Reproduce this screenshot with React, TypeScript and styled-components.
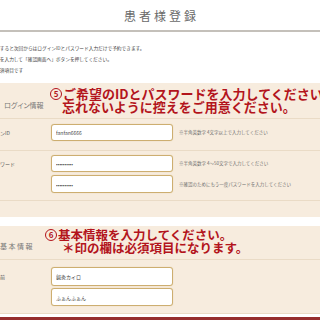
import styled, { createGlobalStyle } from "styled-components";

const GlobalStyle = createGlobalStyle`
  body {
    margin: 0;
    font-family: "Noto Sans CJK JP", "Noto Sans", sans-serif;
  }
`;

const Page = styled.div`
  width: 320px;
  height: 320px;
  overflow: hidden;
  background: #fff;
  display: flex;
  flex-direction: column;
`;

const Header = styled.header`
  height: 30px;
  flex: 0 0 auto;
  display: flex;
  align-items: center;
  justify-content: center;
  border-bottom: 2px solid #c4c0ba;
`;

const Title = styled.h1`
  margin: 0;
  padding-left: 3px;
  font-size: 12px;
  font-weight: 400;
  letter-spacing: 3px;
  color: #6a6a6a;
`;

const Intro = styled.div`
  height: 51px;
  box-sizing: border-box;
  padding-top: 11px;
  margin-left: -19px;
  font-size: 4.7px;
  line-height: 11px;
  color: #444;
  white-space: nowrap;
`;

const Section = styled.section<{ $pad: number }>`
  background: #f7ecde;
  padding-bottom: ${(p) => p.$pad}px;
`;

const Gap = styled.div`
  height: 9px;
  background: #fff;
`;

const SectionHead = styled.div<{ $h: number }>`
  height: ${(p) => p.$h}px;
  box-sizing: border-box;
  display: flex;
  align-items: flex-end;
  padding-bottom: 8px;
  border-bottom: 1px solid #eadbc6;
`;

const HeadLabel = styled.div<{ $indent: number; $spacing: number }>`
  width: 45px;
  flex: 0 0 45px;
  box-sizing: border-box;
  padding-left: ${(p) => p.$indent}px;
  font-size: 7px;
  line-height: 10px;
  letter-spacing: ${(p) => p.$spacing}px;
  color: #777;
  white-space: nowrap;
  font-feature-settings: "palt";
`;

const Note = styled.div<{ $size: number }>`
  margin-bottom: -3px;
  font-size: ${(p) => p.$size}px;
  line-height: 13px;
  font-weight: 700;
  color: #b3141c;
  white-space: nowrap;
`;

const NoteLine = styled.div<{ $indent: number }>`
  display: flex;
  align-items: center;
  padding-left: ${(p) => p.$indent}px;
`;

const CircleNum = styled.span`
  display: inline-flex;
  align-items: center;
  justify-content: center;
  box-sizing: border-box;
  width: 12px;
  height: 12px;
  margin-right: 1px;
  border: 1.5px solid #b3141c;
  border-radius: 50%;
  font-size: 8px;
  line-height: 1;
`;

const FieldRow = styled.div<{ $top: number; $bottom: number }>`
  display: grid;
  grid-template-columns: 45px 122px 1fr;
  column-gap: 6px;
  padding: ${(p) => p.$top}px 0 ${(p) => p.$bottom}px;
  border-bottom: 1px solid #eadbc6;
`;

const FieldLabel = styled.div<{ $h: number; $shift: number }>`
  margin-left: ${(p) => p.$shift}px;
  font-size: 5px;
  line-height: ${(p) => p.$h}px;
  color: #555;
  white-space: nowrap;
`;

const Stack = styled.div<{ $gap: number }>`
  display: flex;
  flex-direction: column;
  gap: ${(p) => p.$gap}px;
`;

const Field = styled.input<{ $h: number }>`
  box-sizing: border-box;
  width: 122px;
  height: ${(p) => p.$h}px;
  margin: 0;
  padding: 0 4px;
  border: 1px solid #cdae70;
  border-radius: 3px;
  background: #fff;
  box-shadow: 0 0 1px #dcc493;
  font-family: "Noto Sans CJK JP", sans-serif;
  font-size: 5px;
  color: #444;
  outline: none;
`;

const Hint = styled.div<{ $h: number }>`
  font-size: 4.5px;
  line-height: ${(p) => p.$h}px;
  color: #6f6f6f;
  white-space: nowrap;
`;

const BottomBar = styled.div`
  height: 3px;
  margin-top: auto;
  background: #962d2d;
`;

export default function App() {
  return (
    <>
      <GlobalStyle />
      <Page>
        <Header>
          <Title>患者様登録</Title>
        </Header>
        <Intro>
          <div>会員登録すると次回からはログインIDとパスワード入力だけで予約できます。</div>
          <div>必要事項を入力して「確認画面へ」ボタンを押してください。</div>
          <div>＊印は必須項目です</div>
        </Intro>

        <Section $pad={16}>
          <SectionHead $h={36}>
            <HeadLabel $indent={4} $spacing={0}>ログイン情報</HeadLabel>
            <Note $size={13}>
              <NoteLine $indent={5}>
                <CircleNum>5</CircleNum>ご希望のIDとパスワードを入力してください。
              </NoteLine>
              <NoteLine $indent={17}>忘れないように控えをご用意ください。</NoteLine>
            </Note>
          </SectionHead>
          <FieldRow $top={5} $bottom={9}>
            <FieldLabel $h={17} $shift={-15}>ログインID</FieldLabel>
            <Field $h={17} readOnly defaultValue="fanfan6666" />
            <Hint $h={17}>※半角英数字 4文字以上で入力してください</Hint>
          </FieldRow>
          <FieldRow $top={4} $bottom={7}>
            <FieldLabel $h={17} $shift={-10}>パスワード</FieldLabel>
            <Stack $gap={3}>
              <Field $h={17} readOnly type="password" defaultValue="fanfan6666" />
              <Field $h={18} readOnly type="password" defaultValue="fanfan6666" />
            </Stack>
            <Stack $gap={3}>
              <Hint $h={17}>※半角英数字 4～50文字で入力してください</Hint>
              <Hint $h={18}>※確認のためにもう一度パスワードを入力してください</Hint>
            </Stack>
          </FieldRow>
        </Section>

        <Gap />

        <Section $pad={0}>
          <SectionHead $h={34}>
            <HeadLabel $indent={-1} $spacing={1.5}>基本情報</HeadLabel>
            <Note $size={12.5}>
              <NoteLine $indent={0}>
                <CircleNum>6</CircleNum>基本情報を入力してください。
              </NoteLine>
              <NoteLine $indent={17}>＊印の欄は必須項目になります。</NoteLine>
            </Note>
          </SectionHead>
          <FieldRow $top={7} $bottom={7}>
            <FieldLabel $h={19} $shift={-10}>お名前</FieldLabel>
            <Stack $gap={2}>
              <Field $h={19} readOnly defaultValue="鍼灸カイロ" />
              <Field $h={18} readOnly defaultValue="ふぁんふぁん" />
            </Stack>
            <div />
          </FieldRow>
        </Section>
        <BottomBar />
      </Page>
    </>
  );
}
